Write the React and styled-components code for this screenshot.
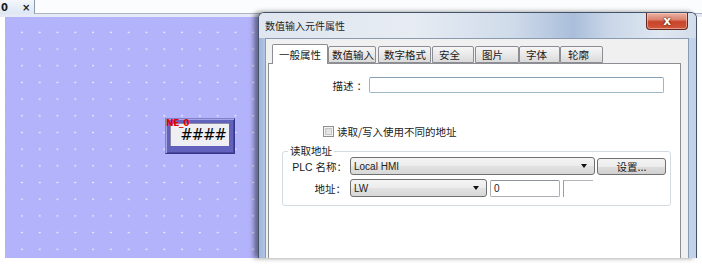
import React from 'react';
import styled, { createGlobalStyle } from 'styled-components';

const Global = createGlobalStyle`
  html, body { margin: 0; padding: 0; background: #ffffff; }
  body {
    width: 702px; height: 267px; overflow: hidden;
    font-family: "Liberation Sans", "Noto Sans CJK SC", sans-serif;
  }
`;

const Screen = styled.div`
  position: relative;
  width: 702px;
  height: 267px;
  overflow: hidden;
  background: #ffffff;
  display: flex;
  flex-direction: column;
`;

const TopBar = styled.div`
  flex: none;
  height: 14px;
  display: flex;
  background: linear-gradient(#f4f7fb, #dde6f2);
`;

const DocTab = styled.div`
  width: 34px;
  display: flex;
  align-items: center;
  gap: 14px;
  padding-left: 1px;
  box-sizing: border-box;
  font: bold 10px "DejaVu Sans", sans-serif;
  color: #1a1a1a;
`;

const TabRest = styled.div`
  flex: 1;
  background: #fbfcfe;
  border-left: 1px solid #8c9ab0;
  border-bottom: 1px solid #aab4c2;
`;

const Workspace = styled.div`
  flex: none;
  height: 244px;
  padding: 3px 0 0 5px;
  background: linear-gradient(#e6e9f6 0, #e6e9f6 3px, #ffffff 3px);
  box-sizing: border-box;
  display: flex;
`;

const Canvas = styled.div`
  position: relative;
  width: 262px;
  height: 241px;
  background-color: #b3b3fb;
  background-image: radial-gradient(circle, rgba(255, 255, 255, 0.75) 0.5px, rgba(255, 255, 255, 0) 1.2px);
  background-size: 17.8px 16.7px;
  background-position: 8px 7px;
`;

const NumBox = styled.div`
  position: absolute;
  left: 160px;
  top: 101px;
  width: 70px;
  height: 36px;
  box-sizing: border-box;
  background: #6262bc;
  border: 1px solid #37378a;
  border-top-color: #8080cc;
  border-left-color: #8080cc;
  padding: 4px 5px 7px 4px;
  box-shadow: inset 1px 1px 0 #a4a4e6, inset -1px -1px 0 #46469c;
`;

const NumField = styled.div`
  height: 100%;
  background: #eeeef3;
  border-top: 1px solid #8c8ca4;
  border-left: 1px solid #8c8ca4;
  box-sizing: border-box;
  display: flex;
  align-items: center;
  justify-content: center;
  padding-left: 6px;
  font: italic 15px "DejaVu Sans", sans-serif;
  letter-spacing: -1.2px;
  color: #000;
`;

const NameTag = styled.span`
  position: absolute;
  left: 0px;
  top: -1px;
  font: bold 9px "DejaVu Sans", sans-serif;
  color: #e40000;
  letter-spacing: -0.3px;
`;

const Dialog = styled.div`
  position: absolute;
  left: 258px;
  top: 12px;
  width: 439px;
  height: 246px;
  box-sizing: border-box;
  border: 1px solid #44526a;
  border-bottom: none;
  border-radius: 6px 6px 0 0;
  background: linear-gradient(90deg, #9fb5db 0, #b9cbe4 2%, #c2d2e8 100%);
  padding: 0 7px 0 6px;
  display: flex;
  flex-direction: column;
  box-shadow: -4px 0 5px rgba(0, 0, 0, 0.45);
`;

const TitleBar = styled.div`
  position: relative;
  height: 25px;
  flex: none;
  display: flex;
  align-items: center;
  margin: 0 -7px 0 -6px;
  padding-left: 6px;
  border-radius: 5px 5px 0 0;
  background: linear-gradient(90deg, #dfe6ef 0%, #e7ecf3 35%, #cfdbea 58%, #aabedb 72%, #c9d6e8 80%, #dfe7f1 92%, #d3ddea 100%);
  font: 10px "Noto Sans CJK SC", sans-serif;
  color: #1e1e1e;
`;

const CloseButton = styled.div`
  position: absolute;
  top: 0;
  right: 8px;
  width: 42px;
  height: 17px;
  box-sizing: border-box;
  border: 1px solid #5e2a22;
  border-top: none;
  border-radius: 0 0 4px 4px;
  background: linear-gradient(#eab1a4 0%, #dc8571 40%, #c8432a 55%, #d0573c 100%);
  box-shadow: inset 0 0 0 1px rgba(255, 220, 210, 0.5);
  display: flex;
  align-items: center;
  justify-content: center;
  font: bold 12px "DejaVu Sans", sans-serif;
  color: #ffffff;
  text-shadow: 0 0 2px #4a1a10, 0 0 1px #4a1a10;
`;

const Body = styled.div`
  flex: 1;
  display: flex;
  flex-direction: column;
  background: #f0f0f0;
  border: 1px solid #8a9ab0;
  border-bottom: none;
  padding: 5px 7px 0 2px;
`;

const Tabs = styled.div`
  flex: none;
  height: 19px;
  display: flex;
  align-items: flex-end;
  padding-left: 4px;
  position: relative;
  z-index: 1;
`;

const Tab = styled.div`
  box-sizing: border-box;
  width: ${(p) => p.$w}px;
  margin-left: ${(p) => p.$ml}px;
  height: ${(p) => (p.$active ? 20 : 17)}px;
  margin-bottom: ${(p) => (p.$active ? -1 : 0)}px;
  border: 1px solid #8c8e94;
  border-bottom: ${(p) => (p.$active ? 'none' : '1px solid #8c8e94')};
  border-radius: 2px 2px 0 0;
  background: ${(p) => (p.$active ? '#ffffff' : 'linear-gradient(#f6f6f6, #e9e9e9 50%, #dadada)')};
  padding-left: ${(p) => p.$pl}px;
  display: flex;
  align-items: center;
  font: 10.5px "Noto Sans CJK SC", sans-serif;
  color: #1a1a1a;
  white-space: nowrap;
`;

const Panel = styled.div`
  flex: 1;
  background: #ffffff;
  border: 1px solid #8c8e94;
  border-bottom: none;
  display: flex;
  flex-direction: column;
`;

const DescRow = styled.div`
  margin-top: 13px;
  display: flex;
  align-items: center;
`;

const Label = styled.div`
  width: ${(p) => p.$w}px;
  box-sizing: border-box;
  padding-right: ${(p) => p.$pr || 1}px;
  text-align: right;
  font: 10.5px "Liberation Sans", "Noto Sans CJK SC", sans-serif;
  color: #1a1a1a;
  white-space: nowrap;
`;

const TextInput = styled.div`
  box-sizing: border-box;
  width: ${(p) => p.$w}px;
  height: ${(p) => p.$h || 17}px;
  background: #ffffff;
  border: 1px solid #abadb3;
  border-top-color: #8e9299;
  border-radius: 2px;
  display: flex;
  align-items: center;
  padding-left: 3px;
  font: 10px "Liberation Sans", sans-serif;
  color: #222;
`;

const DescInput = styled(TextInput)`
  border-color: #9fb6c6;
  border-top-color: #85a0b4;
`;

const PartialInput = styled.div`
  box-sizing: border-box;
  width: 30px;
  height: 17px;
  border-left: 1px solid #9a9ca2;
  border-top: 1px solid #b4b6bb;
`;

const CheckRow = styled.div`
  margin-top: 31px;
  padding-left: 54px;
  display: flex;
  align-items: center;
  gap: 3px;
  font: 10.5px "Noto Sans CJK SC", sans-serif;
  color: #1a1a1a;
`;

const CheckBox = styled.div`
  width: 11px;
  height: 11px;
  box-sizing: border-box;
  border: 1px solid #8e8f8f;
  background: linear-gradient(135deg, #d4d4d4, #f2f2f2);
  box-shadow: inset 0 0 0 1px #f4f4f4, inset 0 0 0 2px #c6c6c6;
`;

const Group = styled.fieldset`
  margin: 6px 0 0 13px;
  width: 389px;
  box-sizing: border-box;
  border: 1px solid #d5dbe2;
  border-radius: 3px;
  padding: 0 0 8px 0;
  display: flex;
  flex-direction: column;
  gap: 4px;
`;

const Legend = styled.legend`
  margin-left: 5px;
  padding: 0 2px;
  font: 10.5px/12px "Noto Sans CJK SC", sans-serif;
  color: #1a1a1a;
`;

const FieldRow = styled.div`
  display: flex;
  align-items: center;
  gap: ${(p) => p.$gap || 2}px;
`;

const Select = styled.div`
  box-sizing: border-box;
  width: ${(p) => p.$w}px;
  height: 18px;
  border: 1px solid #707070;
  border-radius: 3px;
  background: linear-gradient(#f4f4f4, #ececec 50%, #e2e2e2 51%, #d8d8d8);
  display: flex;
  align-items: center;
  justify-content: space-between;
  padding: 0 7px 0 3px;
  font: 10px "Liberation Sans", sans-serif;
  color: #222;
`;

const Arrow = styled.span`
  width: 0;
  height: 0;
  border-left: 3px solid transparent;
  border-right: 3px solid transparent;
  border-top: 4px solid #111;
`;

const Button = styled.div`
  box-sizing: border-box;
  width: 69px;
  height: 17px;
  border: 1px solid #707070;
  border-radius: 3px;
  background: linear-gradient(#f4f4f4, #ececec 50%, #dddddd 51%, #d0d0d0);
  display: flex;
  align-items: center;
  justify-content: center;
  font: 10.5px "Noto Sans CJK SC", sans-serif;
  color: #1a1a1a;
`;

const TABS = [
  { label: '一般属性', w: 56, ml: 0, pl: 6, active: true },
  { label: '数值输入', w: 48, ml: 0, pl: 3 },
  { label: '数字格式', w: 53, ml: 2, pl: 5 },
  { label: '安全', w: 42, ml: 1, pl: 6 },
  { label: '图片', w: 44, ml: 1, pl: 6 },
  { label: '字体', w: 41, ml: 0, pl: 6 },
  { label: '轮廓', w: 43, ml: 0, pl: 7 },
];

export default function App() {
  return (
    <>
      <Global />
      <Screen>
        <TopBar>
          <DocTab>
            <span>0</span>
            <span>×</span>
          </DocTab>
          <TabRest />
        </TopBar>
        <Workspace>
          <Canvas>
            <NumBox>
              <NumField>####</NumField>
              <NameTag>NE_0</NameTag>
            </NumBox>
          </Canvas>
        </Workspace>

        <Dialog>
          <TitleBar>
            数值输入元件属性
            <CloseButton>x</CloseButton>
          </TitleBar>
          <Body>
            <Tabs>
              {TABS.map((t) => (
                <Tab key={t.label} $w={t.w} $ml={t.ml} $pl={t.pl} $active={t.active}>
                  {t.label}
                </Tab>
              ))}
            </Tabs>
            <Panel>
              <DescRow>
                <Label $w={100} $pr={2}>描述 ：</Label>
                <DescInput $w={295} $h={16} />
              </DescRow>
              <CheckRow>
                <CheckBox />
                <span>读取/写入使用不同的地址</span>
              </CheckRow>
              <Group>
                <Legend>读取地址</Legend>
                <FieldRow>
                  <Label $w={65}>PLC 名称：</Label>
                  <Select $w={245}>
                    <span>Local HMI</span>
                    <Arrow />
                  </Select>
                  <Button>设置...</Button>
                </FieldRow>
                <FieldRow $gap={3}>
                  <Label $w={64}>地址：</Label>
                  <Select $w={137}>
                    <span>LW</span>
                    <Arrow />
                  </Select>
                  <TextInput $w={70}>0</TextInput>
                  <PartialInput />
                </FieldRow>
              </Group>
            </Panel>
          </Body>
        </Dialog>
      </Screen>
    </>
  );
}
